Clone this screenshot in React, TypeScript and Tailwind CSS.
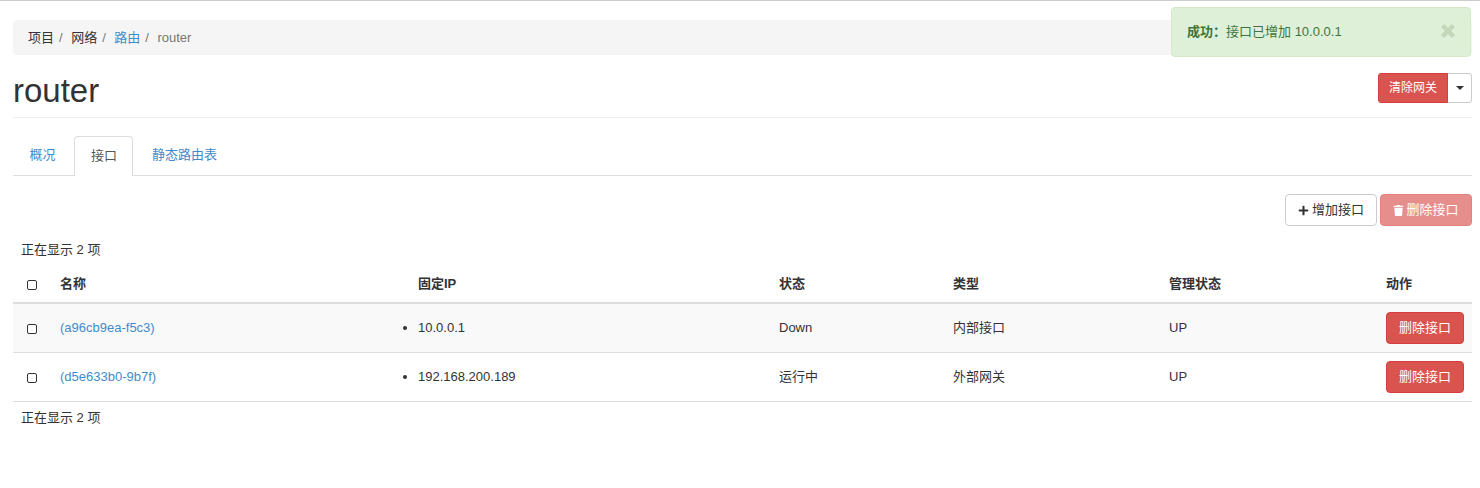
import { FaPlus, FaTrash } from 'react-icons/fa';

// Bootstrap 3 look: the router detail page with its interfaces table.
const FONT = '[font-family:"Liberation_Sans","Noto_Sans_CJK_SC",sans-serif]';

const ROWS = [
  { id: '(a96cb9ea-f5c3)', ip: '10.0.0.1', status: 'Down', type: '内部接口', admin: 'UP' },
  { id: '(d5e633b0-9b7f)', ip: '192.168.200.189', status: '运行中', type: '外部网关', admin: 'UP' },
];

function Check() {
  return <span className="mt-[2px] block h-[10px] w-[10px] rounded-[2px] border border-[#333] bg-white" />;
}

function Crumb({ children, link }: { children: string; link?: boolean }) {
  return (
    <>
      <span className={link ? 'text-[#428bca]' : 'text-[#333]'}>{children}</span>
      <span className="mr-[8.5px] ml-[5px] text-[#777]">/</span>
    </>
  );
}

export default function App() {
  return (
    <div className={`relative h-[488px] w-[1480px] overflow-hidden border-t border-[#ccc] bg-white pr-[8px] pl-[13px] text-[13px] text-[#333] ${FONT}`}>
      {/* Success toast floats over the breadcrumb */}
      <div className="absolute top-[6px] left-[1171px] flex h-[50px] w-[300px] items-center justify-between rounded border border-[#d6e9c6] bg-[#dff0d8] pr-[14px] pl-[15px] text-[#3c763d]">
        <span>
          <b>成功：</b>接口已增加 10.0.0.1
        </span>
        <svg width="16" height="16" viewBox="0 0 16 16" className="mt-[-2px] text-[#c3d8b9]">
          <path d="M2.5 2.5 L13.5 13.5 M13.5 2.5 L2.5 13.5" stroke="currentColor" strokeWidth="4.5" />
        </svg>
      </div>

      <div className="mt-[19px] flex h-[35px] items-center rounded bg-[#f5f5f5] pl-[15px]">
        <Crumb>项目</Crumb>
        <Crumb>网络</Crumb>
        <Crumb link>路由</Crumb>
        <span className="text-[#777]">router</span>
      </div>

      <div className="mt-[10px] flex h-[53px] items-center justify-between border-b border-[#eee] pb-[1px]">
        <h1 className="text-[33px] leading-[36px] text-[#333]">router</h1>
        <div className="mt-[-6px] flex h-[30px] text-[12px]">
          <span className="flex w-[70px] items-center justify-center rounded-l-[3px] border border-[#d43f3a] bg-[#d9534f] text-white">清除网关</span>
          <span className="flex w-[24px] items-center justify-center rounded-r-[3px] border border-l-0 border-[#ccc] bg-white">
            <span className="h-0 w-0 border-x-[4px] border-t-[4px] border-x-transparent border-t-[#333]" />
          </span>
        </div>
      </div>

      <div className="mt-[18px] flex h-[40px] border-b border-[#ddd] text-[#428bca]">
        <span className="flex h-[39px] w-[59px] items-center justify-center pb-[2px]">概况</span>
        <span className="ml-[2px] flex h-[40px] w-[59px] items-center justify-center rounded-t border border-b-0 border-[#ddd] bg-white pb-[2px] pl-[1px] text-[#555]">接口</span>
        <span className="flex h-[39px] items-center pr-[20px] pb-[2px] pl-[19px]">静态路由表</span>
      </div>

      <div className="mt-[18px] flex h-[32px] justify-end gap-[3px]">
        <span className="flex w-[92px] items-center justify-center gap-[3px] rounded border border-[#ccc] bg-white">
          <FaPlus size={11} />
          增加接口
        </span>
        <span className="flex w-[92px] items-center justify-center gap-[2px] rounded border border-[#d43f3a] bg-[#d9534f] text-white opacity-65">
          <FaTrash size={11} />
          删除接口
        </span>
      </div>

      <div className="mt-[16px] h-[17px] pl-[8px] leading-[16px]">正在显示 2 项</div>

      <table className="mt-[7px] w-[1459px] table-fixed border-collapse">
        <thead>
          <tr className="h-[37px] border-b-2 border-[#ddd] text-left">
            <th className="w-[39px] pl-[14px]"><Check /></th>
            <th className="w-[358px] pl-[8px]">名称</th>
            <th className="w-[361px] pl-[8px]">固定IP</th>
            <th className="w-[174px] pl-[8px]">状态</th>
            <th className="w-[216px] pl-[8px]">类型</th>
            <th className="w-[217px] pl-[8px]">管理状态</th>
            <th className="pl-[8px]">动作</th>
          </tr>
        </thead>
        <tbody>
          {ROWS.map((row, i) => (
            <tr key={row.id} className={`h-[49px] border-b border-[#ddd] ${i === 0 ? 'bg-[#f9f9f9]' : ''}`}>
              <td className="pl-[14px]"><Check /></td>
              <td className="pl-[8px] text-[#428bca]">{row.id}</td>
              <td className="pl-[8px]">
                <ul className="list-disc"><li>{row.ip}</li></ul>
              </td>
              <td className="pl-[8px]">{row.status}</td>
              <td className="pl-[8px]">{row.type}</td>
              <td className="pl-[8px]">{row.admin}</td>
              <td className="pr-[8px] text-right">
                <span className="inline-flex h-[32px] w-[78px] items-center justify-center rounded border border-[#d43f3a] bg-[#d9534f] align-middle text-white">删除接口</span>
              </td>
            </tr>
          ))}
        </tbody>
      </table>

      <div className="mt-[8px] pl-[8px] leading-[16px]">正在显示 2 项</div>
    </div>
  );
}
